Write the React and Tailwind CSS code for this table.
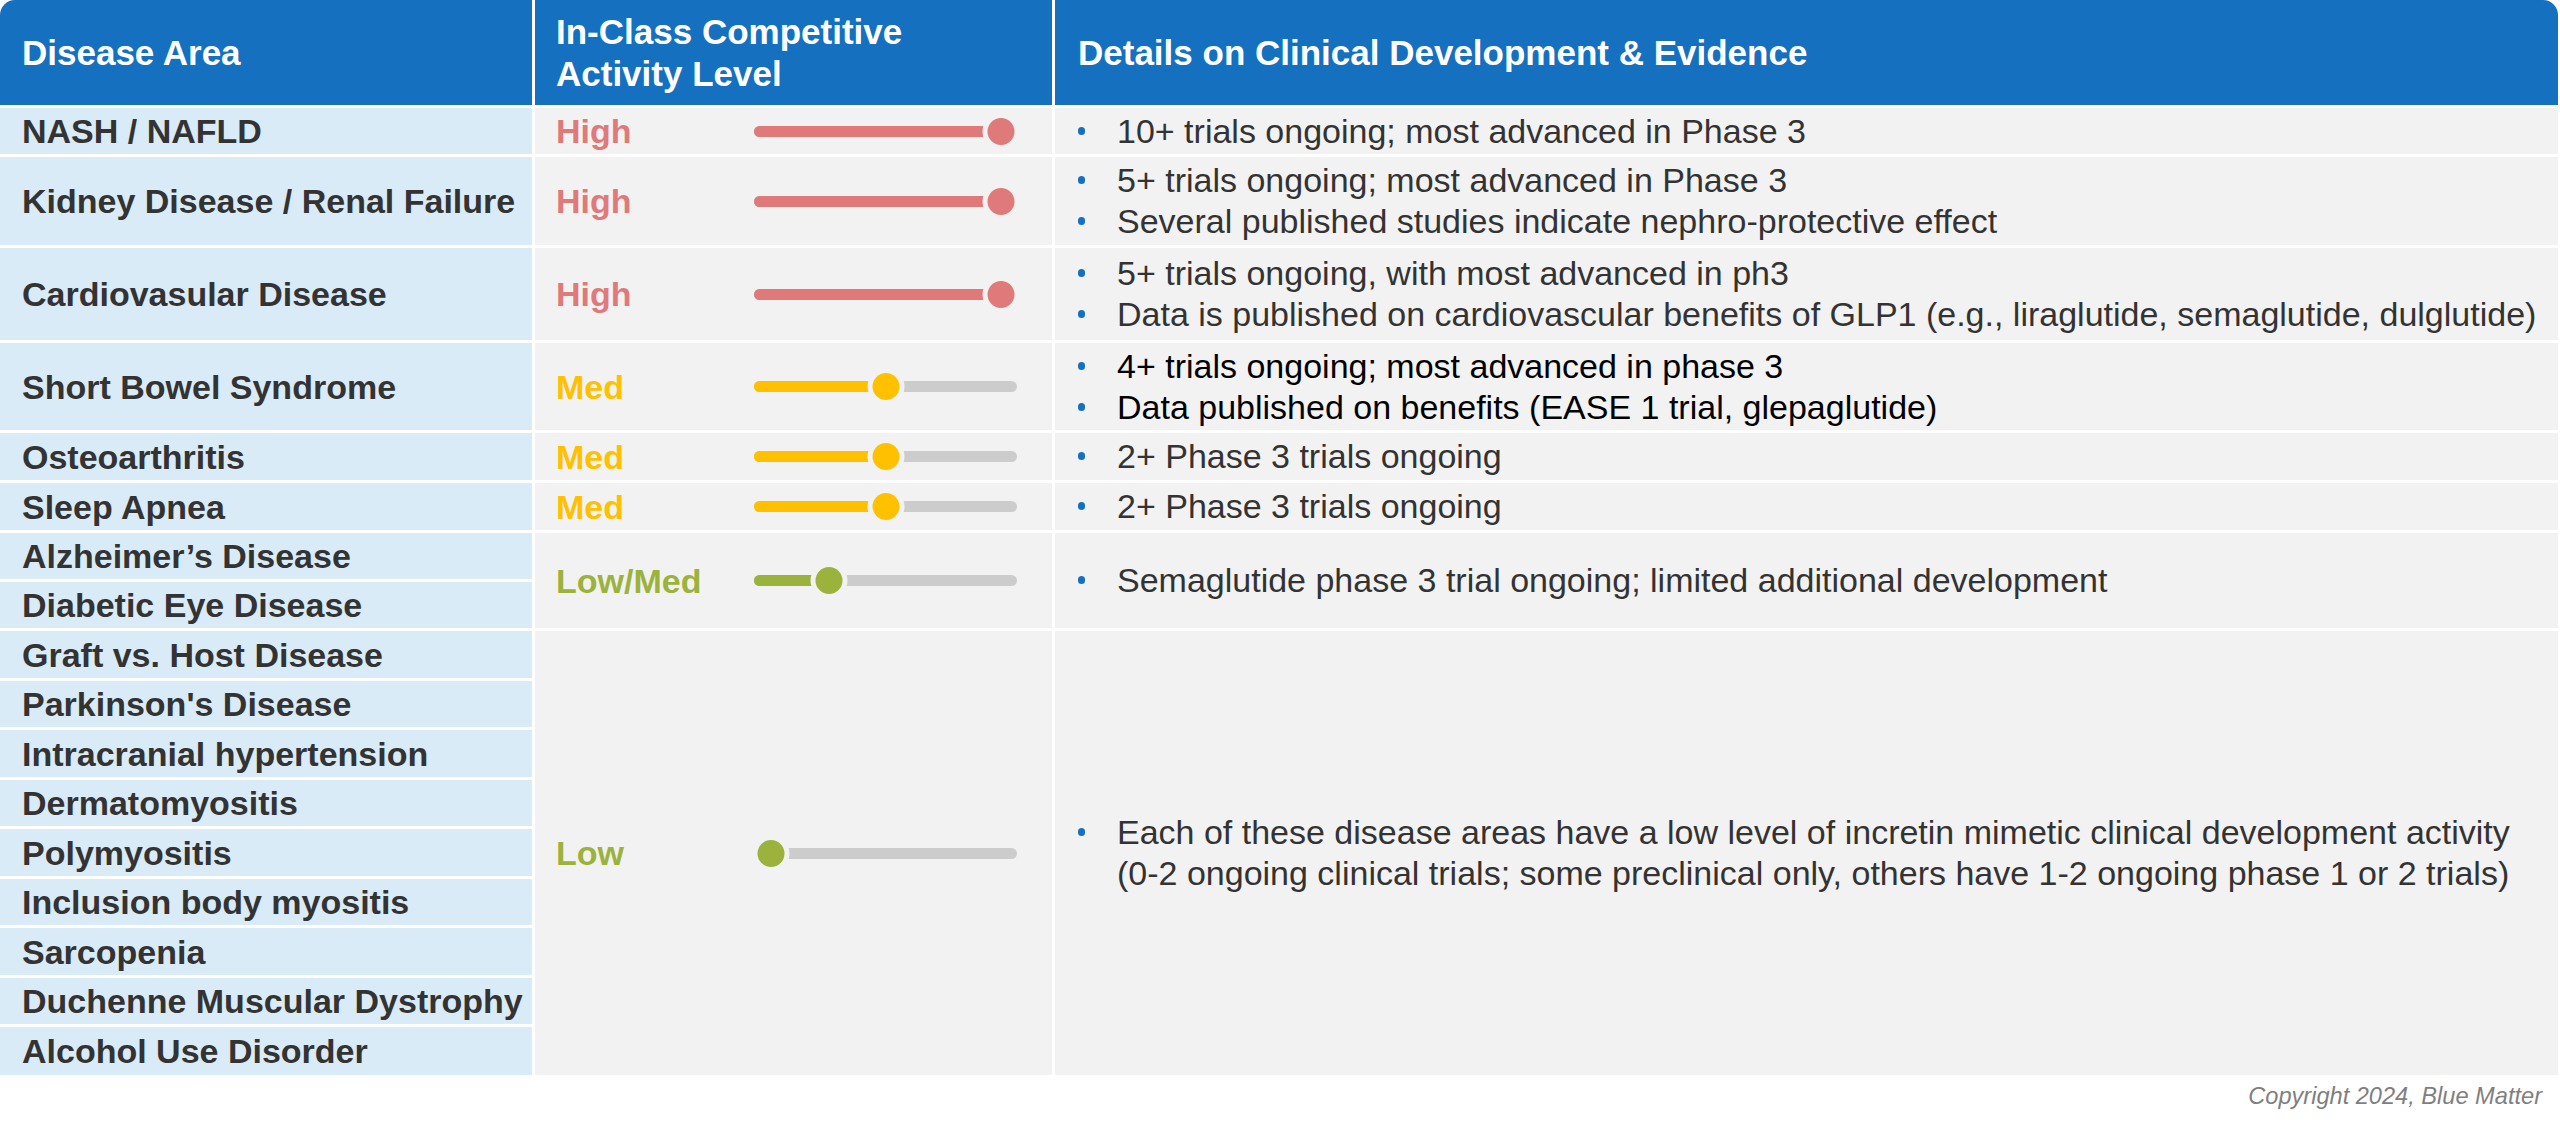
import React from "react";

function Slider({ color, cx }) {
  return (
    <svg width="275" height="37" viewBox="0 0 275 37" className="shrink-0">
      <line x1="11.5" y1="18.5" x2="263.5" y2="18.5" stroke="#cccccc" strokeWidth="11" strokeLinecap="round" />
      <line x1="11.5" y1="18.5" x2={cx} y2="18.5" stroke={color} strokeWidth="11" strokeLinecap="round" />
      <circle cx={cx} cy="18.5" r="18.5" fill="#f2f2f2" />
      <circle cx={cx} cy="18.5" r="13.5" fill={color} />
    </svg>
  );
}

const LEVELS = {
  high: { label: "High", color: "#e07a7a", cx: 253 },
  med: { label: "Med", color: "#ffc000", cx: 138 },
  lowmed: { label: "Low/Med", color: "#9bb23c", cx: 81 },
  low: { label: "Low", color: "#9bb23c", cx: 23 },
};

function Level({ level, span }) {
  const l = LEVELS[level];
  return (
    <div className={`col-start-2 bg-[#f2f2f2] flex items-center pl-[21px] ${span}`}>
      <div className="w-[192px] shrink-0 font-bold text-[34px] leading-[40px]" style={{ color: l.color }}>
        {l.label}
      </div>
      <Slider color={l.color} cx={l.cx} />
    </div>
  );
}

function Details({ items, span, dark }) {
  return (
    <div className={`col-start-3 bg-[#f2f2f2] flex flex-col justify-center pl-[23px] pr-[20px] ${span}`}>
      {items.map((t, i) => (
        <div key={i} className="flex items-start">
          <div className="w-[39px] shrink-0 pt-[16px]">
            <div className="w-[7px] h-[8px] rounded-full bg-[#1570bf]" />
          </div>
          <div className={`text-[34px] leading-[41px] ${dark ? "text-black" : "text-[#333333]"}`}>{t}</div>
        </div>
      ))}
    </div>
  );
}

function Disease({ name }) {
  return (
    <div className="col-start-1 bg-[#daebf8] flex items-center pl-[22px] font-bold text-[34px] leading-[40px] text-[#333333] whitespace-nowrap">
      {name}
    </div>
  );
}

export default function App() {
  return (
    <div className="w-[2560px] h-[1124px] bg-white font-['Liberation_Sans',Arial,sans-serif] overflow-hidden">
      <div className="w-[2558px] grid grid-cols-[532px_517px_1fr] gap-x-[3px] gap-y-[3px] grid-rows-[105px_46px_88px_92px_87px_47px_47px_46px_46px_47px_46px_47px_46px_47px_46px_47px_46px_48px]">
        {/* Header */}
        <div className="col-start-1 bg-[#1570bf] rounded-tl-[15px] flex items-center pl-[22px] text-white font-bold text-[35px] leading-[42px]">
          Disease Area
        </div>
        <div className="col-start-2 bg-[#1570bf] flex items-center pl-[21px] text-white font-bold text-[35px] leading-[42px]">
          <div>
            In-Class Competitive
            <br />
            Activity Level
          </div>
        </div>
        <div className="col-start-3 bg-[#1570bf] rounded-tr-[15px] flex items-center pl-[23px] text-white font-bold text-[35px] leading-[42px]">
          Details on Clinical Development &amp; Evidence
        </div>

        {/* NASH */}
        <Disease name="NASH / NAFLD" />
        <Level level="high" span="" />
        <Details span="" items={["10+ trials ongoing; most advanced in Phase 3"]} />

        {/* Kidney */}
        <Disease name="Kidney Disease / Renal Failure" />
        <Level level="high" span="" />
        <Details
          span=""
          items={["5+ trials ongoing; most advanced in Phase 3", "Several published studies indicate nephro-protective effect"]}
        />

        {/* Cardio */}
        <Disease name="Cardiovasular Disease" />
        <Level level="high" span="" />
        <Details
          span=""
          items={[
            "5+ trials ongoing, with most advanced in ph3",
            "Data is published on cardiovascular benefits of GLP1 (e.g., liraglutide, semaglutide, dulglutide)",
          ]}
        />

        {/* SBS */}
        <Disease name="Short Bowel Syndrome" />
        <Level level="med" span="" />
        <Details
          span=""
          dark
          items={["4+ trials ongoing; most advanced in phase 3", "Data published on benefits (EASE 1 trial, glepaglutide)"]}
        />

        {/* Osteo */}
        <Disease name="Osteoarthritis" />
        <Level level="med" span="" />
        <Details span="" items={["2+ Phase 3 trials ongoing"]} />

        {/* Sleep */}
        <Disease name="Sleep Apnea" />
        <Level level="med" span="" />
        <Details span="" items={["2+ Phase 3 trials ongoing"]} />

        {/* Low/Med */}
        <Disease name="Alzheimer’s Disease" />
        <Level level="lowmed" span="row-span-2" />
        <Details span="row-span-2" items={["Semaglutide phase 3 trial ongoing; limited additional development"]} />
        <Disease name="Diabetic Eye Disease" />

        {/* Low */}
        <Disease name="Graft vs. Host Disease" />
        <Level level="low" span="row-span-9" />
        <Details
          span="row-span-9"
          items={[
            "Each of these disease areas have a low level of incretin mimetic clinical development activity (0-2 ongoing clinical trials; some preclinical only, others have 1-2 ongoing phase 1 or 2 trials)",
          ]}
        />
        <Disease name="Parkinson's Disease" />
        <Disease name="Intracranial hypertension" />
        <Disease name="Dermatomyositis" />
        <Disease name="Polymyositis" />
        <Disease name="Inclusion body myositis" />
        <Disease name="Sarcopenia" />
        <Disease name="Duchenne Muscular Dystrophy" />
        <Disease name="Alcohol Use Disorder" />
      </div>
      <div className="flex justify-end pr-[18px] mt-[7px]">
        <div className="italic text-[23.6px] leading-[28px] text-[#7f7f7f]">Copyright 2024, Blue Matter</div>
      </div>
    </div>
  );
}
